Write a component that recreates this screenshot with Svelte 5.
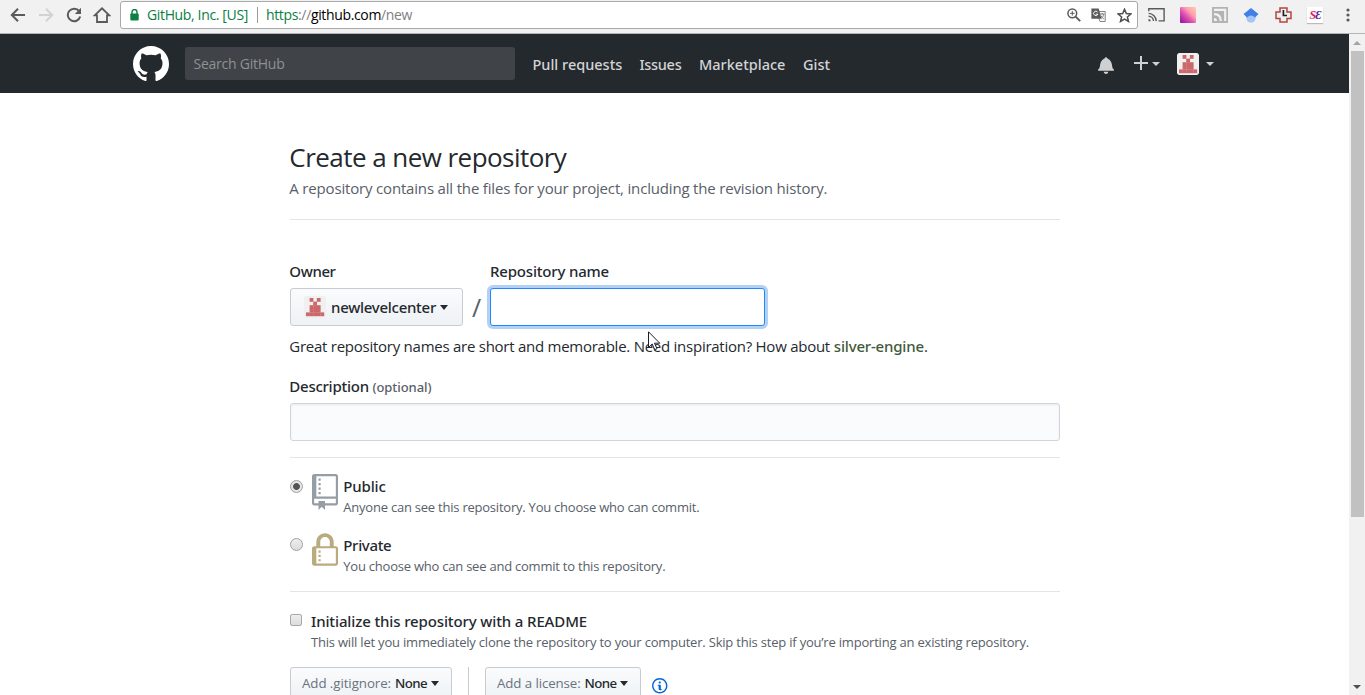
<script>
  const cells = [[1,0],[3,0],[2,1],[1,2],[2,2],[3,2],[1,3],[2,3],[3,3],[0,4],[1,4],[2,4],[3,4],[4,4]];
</script>

{#snippet identicon()}
  <svg class="avatar" viewBox="0 0 22 22">
    <rect width="22" height="22" rx="2" fill="#f0f0f0" />
    {#each cells as [x, y]}
      <rect x={2 + x * 3.6} y={2 + y * 3.6} width="3.8" height="3.8" fill="#cb686c" />
    {/each}
  </svg>
{/snippet}

<div class="window">
  <div class="toolbar">
    <div class="nav-buttons">
      <svg width="16" height="16" viewBox="0 0 16 16" fill="none" stroke="#5a5a5a" stroke-width="2"><path d="M15 8H2M8 1.7 1.8 8 8 14.3" /></svg>
      <svg width="16" height="16" viewBox="0 0 16 16" fill="none" stroke="#d2d2d2" stroke-width="2"><path d="M1 8h13M8 1.7 14.2 8 8 14.3" /></svg>
      <svg width="16" height="16" viewBox="0 0 16 16"><path d="M13.2 4.2A6.3 6.3 0 1 0 14.2 9.6" fill="none" stroke="#5a5a5a" stroke-width="2" /><path d="M15 .8V7H8.8z" fill="#5a5a5a" /></svg>
      <svg width="18" height="16" viewBox="0 0 18 16" fill="none" stroke="#5a5a5a" stroke-width="1.8"><path d="M1.7 8.3 9 1.3l7.3 7H14V15H4V8.3z" /></svg>
    </div>
    <div class="address">
      <svg class="padlock" width="9" height="12" viewBox="0 0 9 12"><path d="M2 5V3a2.5 2.5 0 0 1 5 0v2" fill="none" stroke="#0b8043" stroke-width="1.4" /><rect x=".3" y="4.4" width="8.4" height="7" rx=".8" fill="#0b8043" /></svg>
      <span class="cert">GitHub, Inc. [US]</span>
      <span class="bar"></span>
      <span class="url"><span class="green">https</span>://<span class="host">github.com</span>/new</span>
      <div class="page-actions">
        <svg width="14" height="14" viewBox="0 0 14 14" fill="none" stroke="#5a5a5a" stroke-width="1.5"><circle cx="5.3" cy="5.3" r="4.4" /><path d="m8.6 8.6 4.6 4.6" stroke-width="1.9" /><path d="M3 5.3h4.6M5.3 3v4.6" stroke-width="1" /></svg>
        <svg width="15" height="14" viewBox="0 0 15 14"><path d="M5.5 3.5h8.7v10H9z" fill="#f8f8f8" stroke="#777" stroke-width=".9" /><path d="M.4.4h7.3l2.8 10.4H.4z" fill="#5a5a5a" /><path d="M6.6 4a2.2 2.2 0 1 0 .3 2.2H4.8" fill="none" stroke="#fff" stroke-width="1" /><path d="M9 6h4.5M11.1 5v1M12.8 6c-.3 2-1.3 3.4-2.5 4.2M9.8 7.4c.6 1.6 1.7 2.6 3 3.4" fill="none" stroke="#777" stroke-width=".9" /></svg>
        <svg width="15" height="15" viewBox="0 0 15 15" fill="none" stroke="#4e4e4e" stroke-width="1.5"><path d="m7.500 1.300 1.800 4.300 4.600.4-3.500 3 1.100 4.500-4-2.400-4 2.400 1.100-4.500-3.500-3 4.600-.4z" /></svg>
      </div>
    </div>
    <div class="extensions">
      <svg width="17" height="14" viewBox="0 0 17 14" fill="none" stroke="#5a5a5a" stroke-width="1.4"><path d="M.8 3.300V.8h15.300v12.100h-5.600M.6 5.400a8 8 0 0 1 7.700 7.700M.6 8.200a5 5 0 0 1 4.900 4.900" /><path d="M.5 11v2.300h2.300A2.300 2.300 0 0 0 .5 11z" fill="#5a5a5a" stroke="none" /></svg>
      <span class="swatch"></span>
      <svg width="16" height="16" viewBox="0 0 16 16"><rect width="16" height="16" fill="#b3b3b3" /><path d="M2 2.800H13.200V14M2 7.200Q8.800 7.200 8.800 14" fill="none" stroke="#f1f1f1" stroke-width="2.200" /><path d="M2 11q3 0 3 3H2z" fill="#f1f1f1" /></svg>
      <svg width="16" height="15" viewBox="0 0 16 15"><circle cx="8" cy="10" r="4.700" fill="#a5c5f8" /><path d="M8 0 15.500 6 12 9.500Q8 5.600 4 9.500L.5 6z" fill="#4280e8" /></svg>
      <svg width="17" height="16" viewBox="0 0 17 16"><path d="M5 1h7v4h4v6.500h-4V15H5v-3.500H1V5h4z" fill="#edf0f2" stroke="#b5443e" stroke-width="1.500" /><path d="M8.400 3v5.500H12" fill="none" stroke="#222" stroke-width="1.700" /></svg>
      <span class="se"><b>S</b>Ɛ</span>
      <svg class="kebab" width="4" height="14" viewBox="0 0 4 14" fill="#5a5a5a"><circle cx="2" cy="2" r="1.600" /><circle cx="2" cy="7" r="1.600" /><circle cx="2" cy="12" r="1.600" /></svg>
    </div>
  </div>

  <div class="viewport">
    <div class="page">
      <header>
        <svg class="mark" width="36" height="36" viewBox="0 0 16 16" fill="#fff"><path fill-rule="evenodd" d="M8 0C3.58 0 0 3.58 0 8c0 3.54 2.29 6.53 5.47 7.59.4.07.55-.17.55-.38 0-.19-.01-.82-.01-1.49-2.01.37-2.53-.49-2.69-.94-.09-.23-.48-.94-.82-1.13-.28-.15-.68-.52-.01-.53.63-.01 1.080.58 1.230.82.72 1.210 1.870.87 2.330.66.07-.52.28-.87.51-1.070-1.780-.2-3.640-.89-3.640-3.950 0-.87.31-1.590.82-2.150-.08-.2-.36-1.020.08-2.120 0 0 .67-.21 2.200.82.64-.18 1.320-.27 2-.27.68 0 1.360.09 2 .27 1.530-1.040 2.200-.82 2.200-.82.44 1.100.16 1.920.08 2.120.51.56.82 1.270.82 2.150 0 3.070-1.870 3.750-3.650 3.950.29.25.54.73.54 1.480 0 1.070-.01 1.930-.01 2.200 0 .21.15.46.55.38A8.013 8.013 0 0 0 16 8c0-4.420-3.580-8-8-8z" /></svg>
        <div class="search">Search GitHub</div>
        <nav><span class="pulls">Pull requests</span><span class="issues">Issues</span><span class="market">Marketplace</span><span class="gist">Gist</span></nav>
        <div class="user">
          <svg width="16" height="18" viewBox="0 0 14 16" fill="#cfd0d1"><path fill-rule="evenodd" d="M14 12v1H0v-1l.73-.58c.77-.77.81-2.550 1.190-4.420C2.690 3.230 6 2 6 2c0-.55.45-1 1-1s1 .45 1 1c0 0 3.390 1.230 4.160 5 .38 1.880.42 3.660 1.190 4.420l.66.58H14zm-7 4c1.110 0 2-.89 2-2H5c0 1.110.89 2 2 2z" /></svg>
          <svg class="plus" width="14" height="14" viewBox="0 0 14 14" fill="#cfd0d1"><path d="M6 0h2v6h6v2H8v6H6V8H0V6h6z" /></svg>
          <span class="caret"></span>
          {@render identicon()}
          <span class="caret last"></span>
        </div>
      </header>

      <main>
        <h1>Create a new repository</h1>
        <p class="lead">A repository contains all the files for your project, including the revision history.</p>

        <div class="name-row">
          <div class="field owner">
            <label for="owner">Owner</label>
            <button id="owner" class="btn">{@render identicon()}<b>newlevelcenter</b><span class="caret dark"></span></button>
          </div>
          <span class="slash">/</span>
          <div class="field">
            <label class="repo-label" for="repo">Repository name</label>
            <input id="repo" class="focused" />
          </div>
        </div>
        <p class="hint"><span>Great repository names are short and memorable. Need inspiration? How about</span> <strong>silver-engine</strong>.</p>

        <label class="desc-label" for="desc">Description <small>(optional)</small></label>
        <input id="desc" class="desc" />

        <section class="visibility">
          <div class="choice">
            <span class="radio on"></span>
            <svg width="26" height="36" viewBox="0 0 12 16" preserveAspectRatio="none" fill="#959da5"><path fill-rule="evenodd" d="M4 9H3V8h1v1zm0-3H3v1h1V6zm0-2H3v1h1V4zm0-2H3v1h1V2zm8-1v12c0 .55-.45 1-1 1H6v2l-1.500-1.500L3 16v-2H1c-.55 0-1-.45-1-1V1c0-.55.45-1 1-1h10c.55 0 1 .45 1 1zm-1 10H1v2h2v-1h3v1h5v-2zm0-10H2v9h9V1z" /></svg>
            <div><h2 class="public">Public</h2><p class="note anyone">Anyone can see this repository. You choose who can commit.</p></div>
          </div>
          <div class="choice">
            <span class="radio off"></span>
            <svg width="26" height="35" viewBox="0 0 12 16" fill="#b9ab7e"><path fill-rule="evenodd" d="M4 13H3v-1h1v1zm8-6v7c0 .55-.45 1-1 1H1c-.55 0-1-.45-1-1V7c0-.55.45-1 1-1h1V4c0-2.200 1.800-4 4-4s4 1.800 4 4v2h1c.55 0 1 .45 1 1zM3.800 6h4.410V4c0-1.220-.98-2.200-2.200-2.200-1.220 0-2.200.98-2.200 2.200v2H3.800zM11 7H2v7h9V7zM4 8H3v1h1V8zm0 2H3v1h1v-1z" /></svg>
            <div><h2 class="private">Private</h2><p class="note you">You choose who can see and commit to this repository.</p></div>
          </div>
        </section>

        <section class="init">
          <div class="readme">
            <span class="checkbox"></span>
            <div><h2 class="initialize">Initialize this repository with a README</h2><p class="note clone">This will let you immediately clone the repository to your computer. Skip this step if you’re importing an existing repository.</p></div>
          </div>
          <div class="extras">
            <button class="btn small"><span class="ignore">Add .gitignore:</span><b>None</b><span class="caret dark"></span></button>
            <span class="divider"></span>
            <button class="btn small license"><span>Add a license:</span><b>None</b><span class="caret dark"></span></button>
            <svg class="info" width="15.500" height="17.600" viewBox="0 0 14 16" fill="#0366d6"><path fill-rule="evenodd" d="M6.300 5.710a.942.942 0 0 1-.28-.7c0-.28.09-.52.28-.7.19-.18.42-.28.7-.28.28 0 .52.09.7.28.18.19.28.42.28.7 0 .28-.09.52-.28.7a1 1 0 0 1-.7.3c-.28 0-.52-.11-.7-.3zM8 8.010c-.02-.25-.11-.48-.31-.69-.2-.19-.42-.3-.69-.31H6c-.27.02-.48.13-.69.31-.2.2-.3.44-.31.69h1v3c.02.27.11.5.31.69.2.2.42.31.69.31h1c.27 0 .48-.11.69-.31.2-.19.3-.42.31-.69H8V8.010zM7 2.320C3.860 2.320 1.300 4.860 1.300 8c0 3.140 2.560 5.700 5.700 5.700s5.700-2.550 5.700-5.700c0-3.150-2.560-5.690-5.700-5.680zM7 1c3.860 0 7 3.140 7 7s-3.140 7-7 7-7-3.120-7-7 3.140-7 7-7z" /></svg>
          </div>
        </section>
      </main>
    </div>
    <div class="scrollbar"><span class="up"></span><span class="thumb"></span><span class="down"></span></div>
  </div>
</div>
<svg class="pointer" width="13" height="20" viewBox="0 0 13 20"><path d="M.5.800V16.500L4.200 13 6.700 18.700 9 17.700 6.500 12.200H11.800z" fill="#fff" stroke="#1c1c30" stroke-width="1" /></svg>

<style>
  :global(body) { margin: 0; overflow: hidden; background: #fff; }
  * { box-sizing: border-box; }
  h1, h2, p { margin: 0; font-weight: 400; }
  svg { display: block; flex: none; }
  b, strong, h2, label, nav { font-family: "Noto Sans", "Open Sans", sans-serif; font-weight: 500; }
  .window { display: flex; flex-direction: column; width: 1365px; height: 695px; overflow: hidden; font: 15px/24px "Open Sans", "Noto Sans", sans-serif; color: #24292e; white-space: nowrap; }

  .toolbar { display: flex; height: 34px; background: #f1f1f1; border-bottom: 1px solid #b4b4b4; }
  .nav-buttons { display: flex; gap: 12px; width: 120px; padding: 7px 0 0 10px; }
  .nav-buttons svg:last-child { margin-left: -1px; }
  .address { display: flex; align-items: center; width: 1018px; height: 28px; margin-top: 1px; padding: 0 5px 0 9px; background: #fff; border: 1px solid #a9a9a9; border-radius: 3px; font-size: 14px; color: #808080; }
  .cert { width: 110px; margin-left: 8px; color: #0b8043; letter-spacing: -.353px; }
  .bar { width: 1px; height: 16px; margin-right: 8px; background: #9a9a9a; }
  .url { letter-spacing: -.355px; }
  .green { color: #0b8043; }
  .host { color: #000; }
  .page-actions { display: flex; align-items: center; gap: 11px; margin-left: auto; }
  .page-actions svg:first-child { margin-right: -1px; }
  .extensions { display: flex; flex: 1; align-items: center; gap: 15.500px; height: 30px; padding-left: 9.500px; }
  .kebab { margin-left: 7.500px; }
  .swatch { width: 16px; height: 16px; border-radius: 1px; background: linear-gradient(45deg, #8a0fa0, #e054b0 42%, #ff9fb0 65%, #ffd0a8); }
  .se { width: 16px; height: 16px; background: #fff; box-shadow: 0 1px 1px #bbb; font: italic 700 12px/16px "Liberation Serif", serif; text-align: center; color: #5a2ba5; letter-spacing: -.8px; }
  .se b { font: inherit; color: #e0205a; }

  .viewport { display: flex; flex: 1; min-height: 0; }
  .page { width: 1349px; overflow: hidden; }
  header { display: flex; height: 59px; padding-left: 133px; align-items: center; background: #24292e; }
  .search { width: 330px; height: 33px; margin-left: 16px; padding-left: 8.500px; border-radius: 3px; background: #404448; color: #8f9193; font-size: 14px; line-height: 34px; letter-spacing: -.242px; }
  nav { display: flex; margin-left: 17.500px; font-size: 14.500px; color: #d3d4d5; }
  nav span { flex: none; }
  .pulls { width: 107px; }
  .issues { width: 59.500px; letter-spacing: -.3px; }
  .market { width: 104px; }
  .user { display: flex; align-items: center; margin-left: 268px; }
  .user svg:first-child { margin-top: 3px; }
  .user .plus { margin-left: 20px; margin-top: -2px; }
  .caret { flex: none; width: 0; height: 0; border: 4.500px solid transparent; border-top-color: #cfd0d1; border-bottom: 0; margin-left: 3.500px; }
  .avatar { width: 22px; height: 22px; margin-left: 17.500px; border-radius: 2px; }
  .user .last { margin-left: 6.500px; }
  .dark { border-width: 5px 4.500px 0; border-top-color: #24292e; }

  main { width: 770px; margin-left: 290px; padding-top: 48px; text-indent: -.7px; }
  h1 { height: 35px; font-size: 26px; line-height: 32px; letter-spacing: -.548px; }
  .lead { height: 44px; border-bottom: 1px solid #e1e4e8; color: #586069; letter-spacing: -.174px; }
  .name-row { display: flex; align-items: flex-end; margin-top: 39px; }
  .field { display: flex; flex-direction: column; gap: 5px; }
  label { display: block; letter-spacing: -.4px; }
  .repo-label { letter-spacing: -.185px; text-indent: 0; }
  .btn { display: flex; align-items: center; height: 38px; padding: 0 12px; border: 1px solid #c8cbcf; border-radius: 3px; background: linear-gradient(#fafbfc, #eff3f6 90%); font: 15px/24px "Open Sans", sans-serif; color: #24292e; }
  .owner .btn { width: 173px; }
  .owner .avatar { margin: -1px 5px 0 1px; }
  .owner b { letter-spacing: -.273px; }
  .owner .caret { margin-left: 4px; }
  .slash { width: 27px; height: 38px; font-size: 25px; line-height: 38px; text-align: center; text-indent: 0; color: #586069; font-weight: 400; }
  input { display: block; height: 38px; padding: 0 8px; border: 1px solid #d1d5da; border-radius: 3px; background: #fafbfc; box-shadow: inset 0 1px 2px rgba(27, 31, 35, .075); outline: 0; }
  .focused { width: 275px; background: #fff; border-color: #2188ff; box-shadow: 0 0 0 3px rgba(3, 102, 214, .3); }
  .hint { margin-top: 8px; }
  .hint span { letter-spacing: -.255px; }
  .hint strong { color: #3f5b3a; letter-spacing: -.188px; }
  .desc-label { height: 24px; margin-top: 16px; letter-spacing: -.254px; }
  small { font-size: 13px; color: #586069; letter-spacing: -.064px; }
  .desc { width: 770px; margin-top: 5px; }
  .visibility { height: 135px; margin-top: 16px; padding-top: 16px; border: solid #e1e4e8; border-width: 1px 0; }
  .choice { display: flex; height: 59px; }
  .choice svg { margin: 0 6px 0 9px; }
  .radio { flex: none; width: 13px; height: 13px; margin-top: 6px; border: 1px solid #a0a0a0; border-radius: 50%; background: linear-gradient(#eee, #dcdcdc); }
  .off { margin-top: 5px; }
  .on { background: radial-gradient(circle, #555 0 3px, #e6e6e6 3.800px); }
  h2 { font-size: 15px; line-height: 24px; }
  .public { letter-spacing: -.15px; }
  .private { letter-spacing: -.341px; }
  .note { font-size: 13px; line-height: 18px; color: #586069; }
  .anyone { letter-spacing: -.227px; }
  .you { letter-spacing: -.229px; }
  .clone { letter-spacing: -.199px; }
  .initialize { letter-spacing: -.132px; }
  .readme { display: flex; margin-top: 17px; text-indent: 0; }
  .checkbox { flex: none; width: 12px; height: 12px; margin: 5px 9px 0 0; border: 1px solid #a8a8a8; border-radius: 2px; background: linear-gradient(#eee, #dcdcdc); }
  .extras { display: flex; margin-top: 16px; }
  .small { width: 162px; height: 34px; padding: 0 11px 2px; font-size: 13.300px; color: #6a737d; }
  .small b { width: 33px; margin-left: 3.500px; color: #24292e; letter-spacing: -.603px; }
  .small .caret { margin-left: 3px; }
  .ignore { letter-spacing: -.071px; }
  .license { width: 156px; letter-spacing: -.1px; }
  .divider { width: 1px; height: 34px; margin: 0 16px; background: #c6cbd1; }
  .info { margin: 10px 0 0 11px; }

  .scrollbar { display: flex; flex-direction: column; align-items: center; width: 16px; background: #f1f1f1; }
  .up { border: 4px solid transparent; border-top: 0; border-bottom-color: #a3a3a3; margin: 7px 0 6px; }
  .thumb { width: 13px; height: 466px; background: #c1c1c1; }
  .down { margin: auto 0 6px; border: 4px solid transparent; border-bottom: 0; border-top-color: #505050; }
  .pointer { position: absolute; left: 648px; top: 331px; }
</style>
